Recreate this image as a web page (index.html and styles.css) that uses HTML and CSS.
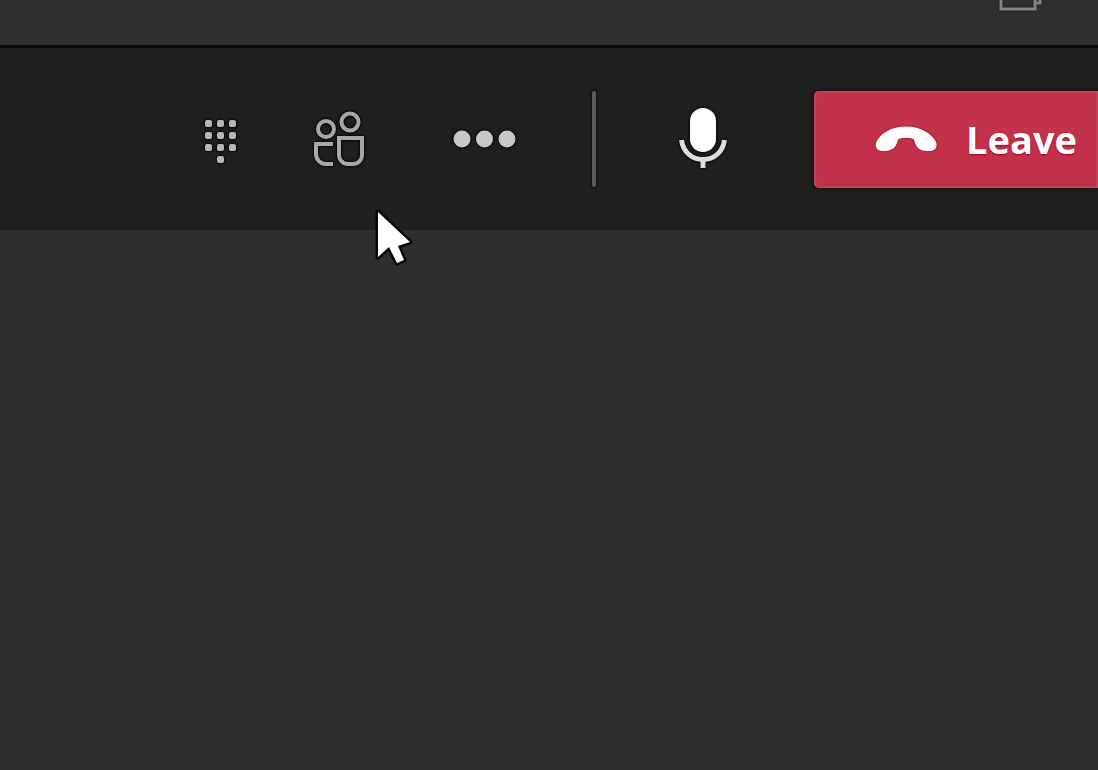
FILE: index.html
```
<!DOCTYPE html>
<html lang="en">
<head>
    <meta charset="UTF-8">
    <meta name="viewport" content="width=device-width, initial-scale=1.0">
    <title>Meeting</title>
    <link rel="stylesheet" href="styles.css">
</head>
<body>

    <header class="titlebar">
        <button class="window-btn" aria-label="Restore window">
            <svg width="44" height="12" viewBox="0 0 44 12" fill="none" stroke="#858585" stroke-width="3">
                <path d="M2 0V9H36V0M36 3H41V0"/>
            </svg>
        </button>
    </header>

    <nav class="toolbar">
        <div class="group">
            <button class="icon-btn dialpad" aria-label="Dial pad">
                <svg width="64" height="64" viewBox="0 0 64 64" fill="#b8b8b8">
                    <rect x="16" y="13" width="7" height="7" rx="2"/>
                    <rect x="28" y="13" width="7" height="7" rx="2"/>
                    <rect x="40" y="13" width="7" height="7" rx="2"/>
                    <rect x="16" y="25" width="7" height="7" rx="2"/>
                    <rect x="28" y="25" width="7" height="7" rx="2"/>
                    <rect x="40" y="25" width="7" height="7" rx="2"/>
                    <rect x="16" y="37" width="7" height="7" rx="2"/>
                    <rect x="28" y="37" width="7" height="7" rx="2"/>
                    <rect x="40" y="37" width="7" height="7" rx="2"/>
                    <rect x="28" y="49" width="7" height="7" rx="2"/>
                </svg>
            </button>
            <button class="icon-btn people" aria-label="Show participants">
                <svg width="64" height="64" viewBox="0 0 64 64" fill="none" stroke="#a8a8a8" stroke-width="4">
                    <circle cx="19" cy="22" r="8"/>
                    <circle cx="43" cy="15" r="8.5"/>
                    <path d="M32 31H55V48A9 9 0 0 1 46 57H41A9 9 0 0 1 32 48Z"/>
                    <path d="M26 37H9V47A10 10 0 0 0 19 57H26"/>
                </svg>
            </button>
            <button class="icon-btn" aria-label="More actions">
                <svg width="64" height="64" viewBox="0 0 64 64" fill="#c8c8c8">
                    <circle cx="9" cy="32" r="8.5"/>
                    <circle cx="31.5" cy="32" r="8.5"/>
                    <circle cx="54" cy="32" r="8.5"/>
                </svg>
            </button>
        </div>

        <span class="divider"></span>

        <button class="icon-btn" aria-label="Mute">
            <svg width="64" height="64" viewBox="0 0 64 64">
                <rect x="19" y="1" width="26" height="44" rx="13" fill="#fff"/>
                <path d="M10.5 33C12 45 21 52.5 32 52.5S52 45 53.5 33M32 52V61" fill="none" stroke="#ddd" stroke-width="5"/>
            </svg>
        </button>

        <button class="leave-btn">
            <svg width="64" height="28" viewBox="0 0 64 28" fill="#fff">
                <path d="M2 18C5 9 17 1.5 32 1.5S58 9 62 17C64 22 61 26 55 26C47 26 44 24 42 20C40 17 41 14 38 13.5C34 12.5 30 12.5 26 13.5C23 14 24 17 22 20C20 24 16 26 9 26C3 26 1 22 2 18Z"/>
            </svg>
            Leave
        </button>
    </nav>

    <main class="stage"></main>

    <!-- mouse pointer over the call -->
    <svg class="pointer" width="40" height="58" viewBox="0 0 40 58">
        <path d="M4 4V49L15 39L23 55L30 52L24 38L36 34Z" fill="#fff" stroke="#050505" stroke-width="5" stroke-linejoin="round" paint-order="stroke"/>
    </svg>

</body>
</html>
```
FILE: styles.css
```
body {
    margin: 0;
    min-height: 100vh;
    display: flex;
    flex-direction: column;
    position: relative;
    overflow-x: hidden;
    background: #2e2e2d;
    font-family: "Open Sans", "Noto Sans", sans-serif;
}

button {
    margin: 0;
    padding: 0;
    border: none;
    background: none;
    color: inherit;
    font: inherit;
    cursor: pointer;
}

svg {
    display: block;
}

.titlebar {
    display: flex;
    justify-content: flex-end;
    align-items: flex-start;
    height: 45px;
    padding-right: 55px;
    border-bottom: 3px solid #080808;
    background: #2f2f2e;
}

.window-btn svg {
    filter: drop-shadow(0 0 1px #111);
}

.toolbar {
    display: flex;
    justify-content: flex-end;
    align-items: center;
    height: 182px;
    background: #1f1f1d;
}

.group {
    display: flex;
}

.icon-btn svg {
    filter: drop-shadow(0 0 1px #000) drop-shadow(0 0 1px #000);
}

.dialpad {
    margin-right: 54px;
}

.people {
    margin-right: 82px;
}

.divider {
    width: 4px;
    height: 96px;
    margin: 0 75px;
    border-radius: 2px;
    background: #5c5c5b;
    box-shadow: 0 0 2px 1px #0c0c0c;
}

.leave-btn {
    display: flex;
    align-items: center;
    gap: 28px;
    height: 97px;
    margin-left: 79px;
    padding: 0 21px 0 60px;
    border-radius: 5px 0 0 5px;
    background: #c4314b;
    box-shadow: inset 0 0 2px 1px #b5566a, 0 0 3px 1px #210810;
    color: #fff;
    font-size: 38px;
    font-weight: 700;
    text-shadow: 0 1px 2px #a00020;
}

.leave-btn svg {
    filter: drop-shadow(0 0 1px #a00020);
}

.stage {
    flex: 1;
    background: #2e2e2d;
}

.pointer {
    position: absolute;
    top: 208px;
    left: 374px;
}
```
